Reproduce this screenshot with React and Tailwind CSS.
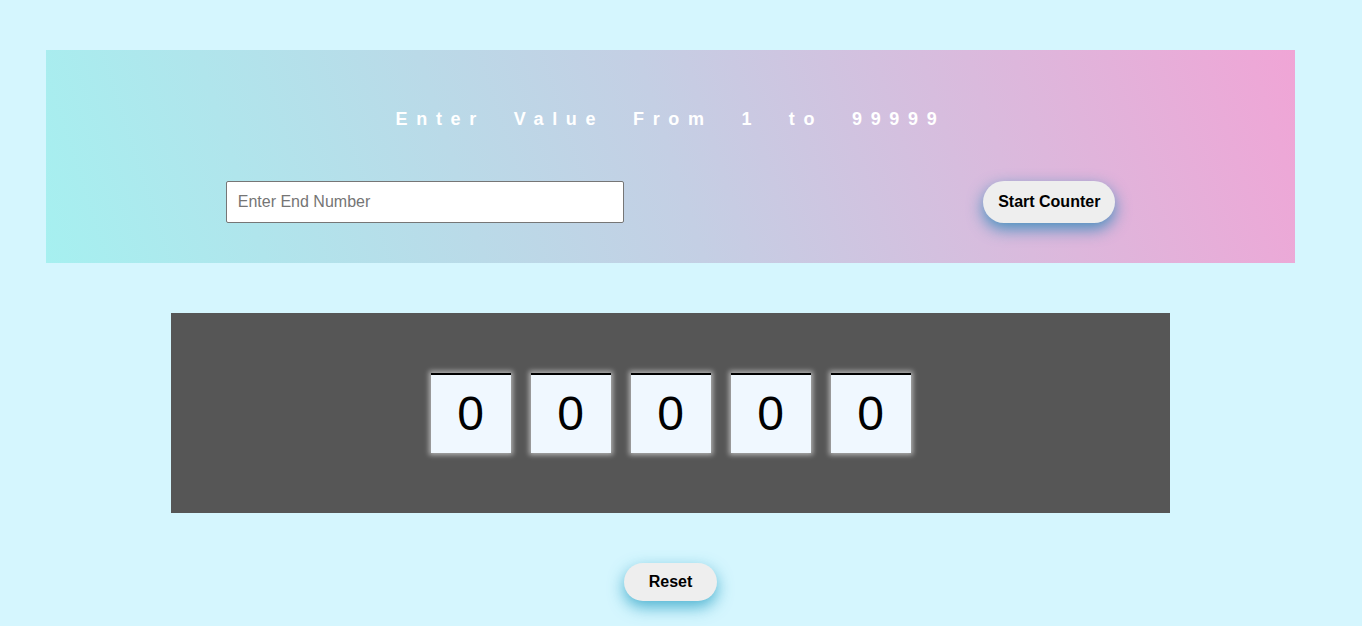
import React, { useState } from 'react';

const Digit = ({ value }) => (
  <div className="w-20 h-20 bg-[#f0f8ff] border-t-2 border-black shadow-[0_0_5px_2px_rgba(255,255,255,0.55)] flex items-center justify-center text-[48px] leading-none text-black">
    {value}
  </div>
);

const App = () => {
  const [endValue, setEndValue] = useState('');
  const [count, setCount] = useState(0);

  const digits = String(count).padStart(5, '0').split('');

  return (
    <div className="min-h-[786px] bg-[#d5f6fe] pt-[50px] font-['Liberation_Sans',Arial,sans-serif]">
      <div className="w-[1341px]">
        {/* Верхняя панель */}
        <section className="mx-auto w-[1249px] h-[213px] bg-[linear-gradient(72deg,#a6f0f0,#c4cfe4_50%,#f0a5d6)]">
          <h2 className="pt-[57px] text-center text-white font-bold text-[18px] leading-[24px] tracking-[8.7px] [word-spacing:15px]">
            Enter Value From 1 to 99999
          </h2>
          <div className="mt-[50px] flex items-center justify-around">
            <input
              type="text"
              value={endValue}
              onChange={(e) => setEndValue(e.target.value)}
              placeholder="Enter End Number"
              className="w-[398px] h-[42px] bg-white border border-[#767676] rounded-[2px] px-[11px] text-[16px] text-black placeholder:text-[#757575] outline-none"
            />
            <button className="w-[132px] h-[42px] rounded-full bg-[#eeeeee] text-[16px] font-bold text-black shadow-[0_6px_16px_rgba(20,130,180,0.75)]">
              Start Counter
            </button>
          </div>
        </section>

        {/* Счетчик */}
        <section className="mx-auto mt-[50px] w-[999px] h-[200px] bg-[#565656] flex items-center justify-center gap-5">
          {digits.map((d, i) => (
            <Digit key={i} value={d} />
          ))}
        </section>

        <div className="mt-[50px] flex justify-center">
          <button
            onClick={() => setCount(0)}
            className="w-[93px] h-[38px] rounded-full bg-[#eeeeee] text-[16px] font-bold text-black shadow-[0_6px_16px_rgba(20,150,190,0.7)]"
          >
            Reset
          </button>
        </div>
      </div>
    </div>
  );
};

export default App;
